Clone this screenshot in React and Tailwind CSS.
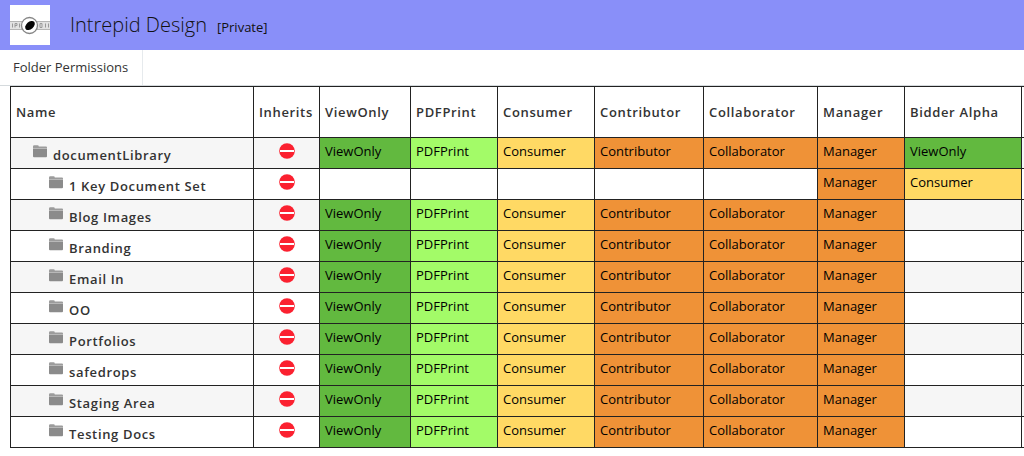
const columns = [
  { name: 'ViewOnly', width: 'w-[91px]' },
  { name: 'PDFPrint', width: 'w-[87px]' },
  { name: 'Consumer', width: 'w-[97px]' },
  { name: 'Contributor', width: 'w-[109px]' },
  { name: 'Collaborator', width: 'w-[114px]' },
  { name: 'Manager', width: 'w-[87px]' },
  { name: 'Bidder Alpha', width: 'w-[117px]' },
];

const roleColors = {
  ViewOnly: 'bg-[#62b93f]',
  PDFPrint: 'bg-[#a3fb68]',
  Consumer: 'bg-[#ffd964]',
  Contributor: 'bg-[#ef9237]',
  Collaborator: 'bg-[#ef9237]',
  Manager: 'bg-[#ef9237]',
};

const allRoles = ['ViewOnly', 'PDFPrint', 'Consumer', 'Contributor', 'Collaborator', 'Manager'];

const folders = [
  { name: 'documentLibrary', root: true, roles: [...allRoles, 'ViewOnly'] },
  { name: '1 Key Document Set', roles: ['', '', '', '', '', 'Manager', 'Consumer'] },
  ...['Blog Images', 'Branding', 'Email In', 'OO', 'Portfolios', 'safedrops', 'Staging Area', 'Testing Docs'].map(
    (name) => ({ name, roles: [...allRoles, ''] })
  ),
];

function Logo() {
  return (
    <svg className="size-10 shrink-0" viewBox="0 0 40 40" role="img" aria-label="Intrepid Design logo">
      <rect width="40" height="40" fill="#fff" />
      <rect y="16" width="40" height="9" fill="#e2e2e2" />
      <path d="M0 16.5h40M0 24.5h40" stroke="#b5b5b5" />
      <path
        d="M2.5 18.5v4M5 22.5v-4h2v2H5M9.5 18.5v4M30 18.5v4h2v-4zM35.5 18.5v4M38.5 18.5v4"
        fill="none"
        stroke="#999"
      />
      <circle cx="19.5" cy="20.5" r="8" fill="#fff" stroke="#858585" strokeWidth="1.3" />
      <ellipse cx="20" cy="20.5" rx="5.600" ry="3.600" fill="#050505" transform="rotate(-42 20 20.5)" />
    </svg>
  );
}

function FolderIcon() {
  return (
    <svg className="size-4 shrink-0" viewBox="0 0 16 16" aria-hidden="true">
      <path d="M1 4V2.500a1.300 1.300 0 0 1 1.300-1.300h3.200A1.300 1.300 0 0 1 6.800 2.500H14a1 1 0 0 1 1 1V5H1z" fill="#9c9c9c" />
      <path d="M1 4.500h14v7.800a1 1 0 0 1-1 1H2a1 1 0 0 1-1-1z" fill="#8b8b8b" />
      <path d="M1 4.500h14" stroke="#b8b8b8" />
    </svg>
  );
}

function BlockedIcon() {
  return (
    <svg className="mx-auto size-4" viewBox="0 0 16 16" role="img" aria-label="Does not inherit">
      <circle cx="8" cy="8" r="7.800" fill="#fb2130" />
      <rect x="1" y="7" width="14" height="2" fill="#fff" />
    </svg>
  );
}

const headerCell = 'border border-[#222] px-[5px] pt-0.5 text-left text-[13px] font-semibold tracking-wider whitespace-nowrap';

export default function App() {
  return (
    <div className="overflow-x-hidden bg-white font-['Open_Sans','Noto_Sans',sans-serif] text-[#333]">
      <header className="flex h-[50px] items-center bg-[#898ff9] px-[10px] text-[#111]">
        <Logo />
        <h1 className="ml-5 text-[20px] leading-7 font-light">Intrepid Design</h1>
        <span className="ml-[10px] pt-1 text-[13px] leading-5">[Private]</span>
      </header>
      <nav className="flex border-b border-[#d5dadd]">
        <a href="#folder-permissions" className="border-r border-[#e6eaed] py-[7px] pr-[14px] pl-[13px] text-[13px] leading-[21px]">
          Folder Permissions
        </a>
      </nav>
      <main id="folder-permissions" className="pb-2 pl-[10px]">
        <table className="w-full table-fixed border-collapse">
          <colgroup>
            <col className="w-[243px]" />
            <col className="w-[66px]" />
            {columns.map((column) => (
              <col key={column.name} className={column.width} />
            ))}
            <col />
          </colgroup>
          <thead>
            <tr className="h-[51px]">
              <th scope="col" className={headerCell}>Name</th>
              <th scope="col" className={headerCell}>Inherits</th>
              {columns.map((column) => (
                <th key={column.name} scope="col" className={headerCell}>{column.name}</th>
              ))}
              <td className="border border-r-0 border-[#222] p-0" />
            </tr>
          </thead>
          <tbody>
            {folders.map((folder) => (
              <tr key={folder.name} className="h-[31px] odd:bg-[#f6f6f6]">
                <th scope="row" className="border border-[#222] p-0 align-top">
                  <div className={`flex gap-[5px] pt-1.5 ${folder.root ? 'pl-[21px]' : 'pl-[37px]'}`}>
                    <FolderIcon />
                    <span className="text-[13px] leading-[22px] font-semibold tracking-wider whitespace-nowrap">{folder.name}</span>
                  </div>
                </th>
                <td className="border border-[#222] px-[5px] pt-[5px] align-top">
                  <BlockedIcon />
                </td>
                {folder.roles.map((role, index) => (
                  <td
                    key={columns[index].name}
                    className={`border border-[#222] px-[5px] pt-[3px] align-top text-[13px] leading-5 text-black ${roleColors[role] ?? ''}`}
                  >
                    {role}
                  </td>
                ))}
                <td className="border border-r-0 border-[#222] p-0" />
              </tr>
            ))}
          </tbody>
        </table>
      </main>
    </div>
  );
}
